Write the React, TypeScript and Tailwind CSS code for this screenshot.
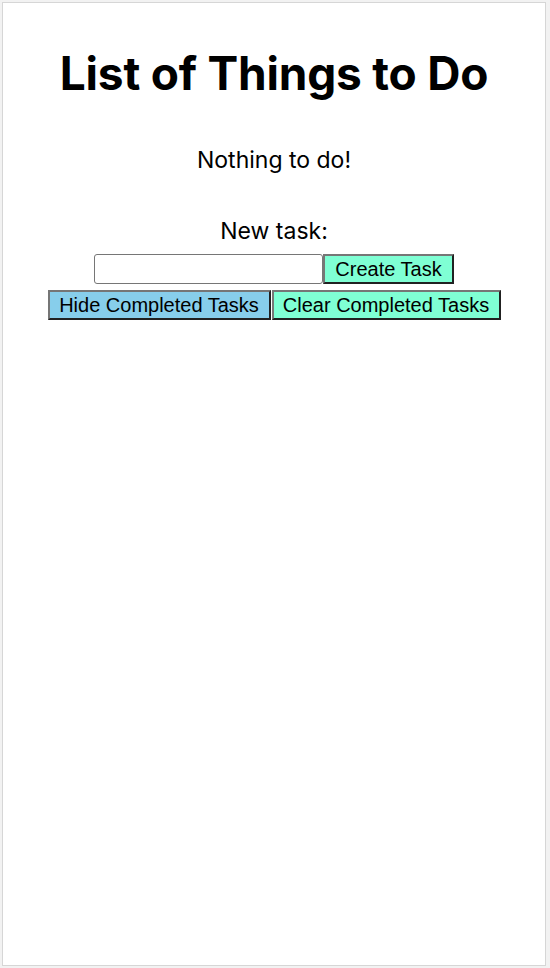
import React, { useState } from "react";

type Task = {
  id: number;
  text: string;
  done: boolean;
};

const App: React.FC = () => {
  const [tasks, setTasks] = useState<Task[]>([]);
  const [text, setText] = useState("");
  const [hideDone, setHideDone] = useState(false);

  const addTask = () => {
    if (!text.trim()) return;
    setTasks([...tasks, { id: Date.now(), text: text.trim(), done: false }]);
    setText("");
  };

  const shown = hideDone ? tasks.filter((t) => !t.done) : tasks;

  return (
    <div className="h-screen bg-[#f2f2f2] pt-[2px] pb-[2px] pl-[2px] pr-[4px]">
      <div className="h-full border border-[#d6d6d6] bg-white text-black flex flex-col items-center font-['Inter',sans-serif]">
        <h1 className="mt-[41px] text-[46px] leading-[58px] font-bold tracking-[-0.2px]">
          List of Things to Do
        </h1>

        {/* Task list */}
        {shown.length === 0 ? (
          <p className="mt-[44px] text-[23px] leading-[28px]">Nothing to do!</p>
        ) : (
          <ul className="mt-[44px] text-[23px] leading-[28px]">
            {shown.map((t) => (
              <li key={t.id}>
                <label className="flex items-center gap-2">
                  <input
                    type="checkbox"
                    checked={t.done}
                    onChange={() =>
                      setTasks(
                        tasks.map((x) =>
                          x.id === t.id ? { ...x, done: !x.done } : x
                        )
                      )
                    }
                  />
                  <span className={t.done ? "line-through" : ""}>{t.text}</span>
                </label>
              </li>
            ))}
          </ul>
        )}

        <p className="mt-[43px] text-[23px] leading-[28px]">New task:</p>

        <div className="mt-[9px] flex font-['Liberation_Sans',Arial,sans-serif]">
          <input
            value={text}
            onChange={(e) => setText(e.target.value)}
            className="w-[229px] h-[30px] border border-[#767676] rounded-[3px] px-1 text-[16px] outline-none"
          />
          <button
            onClick={addTask}
            className="w-[131px] h-[30px] bg-[#7fffd4] border-2 border-[#767676] [border-style:outset] text-[20px] leading-[22px] cursor-pointer"
          >
            Create Task
          </button>
        </div>

        <div className="mt-[6px] flex gap-[1px] font-['Liberation_Sans',Arial,sans-serif]">
          <button
            onClick={() => setHideDone(!hideDone)}
            className="w-[223px] h-[30px] bg-[#87ceeb] border-2 border-[#767676] [border-style:outset] text-[20px] leading-[22px] cursor-pointer"
          >
            {hideDone ? "Show Completed Tasks" : "Hide Completed Tasks"}
          </button>
          <button
            onClick={() => setTasks(tasks.filter((t) => !t.done))}
            className="w-[229px] h-[30px] bg-[#7fffd4] border-2 border-[#767676] [border-style:outset] text-[20px] leading-[22px] cursor-pointer"
          >
            Clear Completed Tasks
          </button>
        </div>
      </div>
    </div>
  );
};

export default App;
